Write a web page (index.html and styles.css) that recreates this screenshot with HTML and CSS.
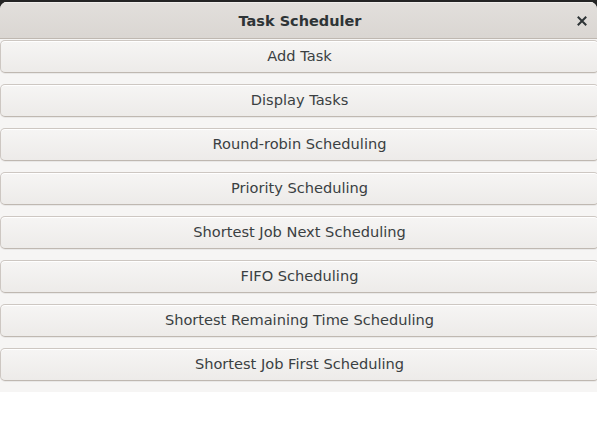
FILE: index.html
```html
<!DOCTYPE html>
<html>
<head>
<meta charset="utf-8">
<link rel="stylesheet" href="styles.css">
</head>
<body>
<div class="frame">
  <div class="window">
    <header class="titlebar">
      <span class="title">Task Scheduler</span>
      <button class="close" aria-label="Close">
        <svg width="10" height="10" viewBox="0 0 10 10"><path d="M1.5 1.5 L8.5 8.5 M8.5 1.5 L1.5 8.5" stroke="#2e3436" stroke-width="2" stroke-linecap="square"/></svg>
      </button>
    </header>
    <main class="actions">
      <button class="btn">Add Task</button>
      <button class="btn">Display Tasks</button>
      <button class="btn">Round-robin Scheduling</button>
      <button class="btn">Priority Scheduling</button>
      <button class="btn">Shortest Job Next Scheduling</button>
      <button class="btn">FIFO Scheduling</button>
      <button class="btn">Shortest Remaining Time Scheduling</button>
      <button class="btn">Shortest Job First Scheduling</button>
    </main>
  </div>
</div>
</body>
</html>
```
FILE: styles.css
```css
html, body {
  margin: 0;
  padding: 0;
  background: #ffffff;
  overflow: hidden;
}
body {
  font-family: "DejaVu Sans", sans-serif;
  color: #2e3436;
}
.frame {
  background: linear-gradient(#242424 0, #242424 10px, #ffffff 10px);
  padding-top: 2px;
}
.window {
  background: #f6f5f4;
  border-radius: 7px 7px 0 0;
  overflow: hidden;
  padding-bottom: 11px;
}
.titlebar {
  position: relative;
  height: 36px;
  border-bottom: 1px solid #bfb8b1;
  background: linear-gradient(#e2dfdc, #dad6d2);
  display: flex;
  align-items: center;
  justify-content: center;
  box-shadow: inset 0 1px #efedeb;
}
.title {
  font-weight: bold;
  font-size: 14.5px;
  margin-left: 3px;
  padding-top: 2px;
}
.close {
  position: absolute;
  right: 5px;
  top: 9px;
  width: 20px;
  height: 20px;
  border: 0;
  padding: 0;
  background: transparent;
  display: flex;
  align-items: center;
  justify-content: center;
}
.actions {
  display: flex;
  flex-direction: column;
  gap: 11px;
  padding-top: 1px;
  margin-right: -2px;
}
.btn {
  height: 33px;
  font-family: "DejaVu Sans", sans-serif;
  font-size: 14.6px;
  color: #3a4042;
  border: 1px solid #cdc7c2;
  border-bottom-color: #bfb8b1;
  border-radius: 5px;
  background: linear-gradient(#f6f5f4, #edebe9);
  box-shadow: inset 0 1px #ffffff, 0 1px rgba(0,0,0,0.05);
  padding: 0 0 2px 0;
  text-align: center;
}
```
